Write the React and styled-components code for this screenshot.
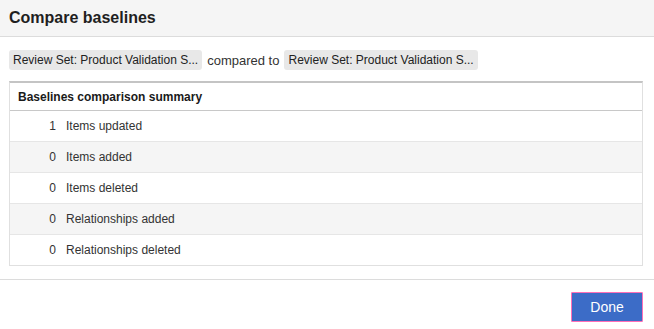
import React from "react";
import styled, { createGlobalStyle } from "styled-components";

const GlobalStyle = createGlobalStyle`
  html, body {
    margin: 0;
    padding: 0;
    background: #ffffff;
    font-family: "Liberation Sans", Arial, sans-serif;
    color: #222;
  }
`;

const Dialog = styled.div`
  width: 654px;
  height: 329px;
  display: flex;
  flex-direction: column;
  background: #fff;
`;

const Header = styled.div`
  height: 36px;
  background: #f5f5f5;
  border-bottom: 1px solid #dcdcdc;
  display: flex;
  align-items: center;
  padding-left: 9px;
`;

const Title = styled.h1`
  margin: 0;
  font-size: 16px;
  font-weight: bold;
  color: #1f1f1f;
`;

const Body = styled.div`
  flex: 1;
  padding: 13px 11px 0 9px;
  display: flex;
  flex-direction: column;
  gap: 11px;
`;

const CompareLine = styled.div`
  display: flex;
  align-items: center;
  gap: 5px;
  font-size: 13px;
  color: #333;
`;

const Chip = styled.span`
  display: inline-flex;
  align-items: center;
  height: 20px;
  padding: 0 4px;
  background: #e8e8e8;
  border-radius: 3px;
  font-size: 12px;
  color: #222;
`;

const Table = styled.div`
  border: 1px solid #e0e0e0;
  border-top: 2px solid #c4c4c4;
`;

const HeadRow = styled.div`
  height: 27px;
  display: flex;
  align-items: center;
  padding-left: 8px;
  font-size: 12px;
  font-weight: bold;
  color: #1a1a1a;
  border-bottom: 1px solid #c8c8c8;
`;

const Row = styled.div`
  height: 30px;
  display: grid;
  grid-template-columns: 46px 1fr;
  column-gap: 10px;
  align-items: center;
  font-size: 12px;
  color: #333;
  background: ${(p) => (p.$alt ? "#f5f5f5" : "#fff")};
  & + & {
    border-top: 1px solid #e6e6e6;
  }
`;

const Count = styled.span`
  text-align: right;
`;

const Footer = styled.div`
  height: 50px;
  border-top: 1px solid #dcdcdc;
  display: flex;
  align-items: flex-start;
  justify-content: flex-end;
  padding: 12px 11px 0 0;
  box-sizing: border-box;
`;

const DoneButton = styled.button`
  width: 72px;
  height: 30px;
  background: #3c6cc7;
  color: #fff;
  border: 1px solid #ff6fb7;
  border-radius: 1px;
  font-family: "Liberation Sans", Arial, sans-serif;
  font-size: 14px;
  cursor: pointer;
`;

const rows = [
  { count: 1, label: "Items updated" },
  { count: 0, label: "Items added" },
  { count: 0, label: "Items deleted" },
  { count: 0, label: "Relationships added" },
  { count: 0, label: "Relationships deleted" },
];

export default function App() {
  return (
    <>
      <GlobalStyle />
      <Dialog>
        <Header>
          <Title>Compare baselines</Title>
        </Header>
        <Body>
          <CompareLine>
            <Chip>Review Set: Product Validation S...</Chip>
            <span>compared to</span>
            <Chip>Review Set: Product Validation S...</Chip>
          </CompareLine>
          <Table>
            <HeadRow>Baselines comparison summary</HeadRow>
            {rows.map((r, i) => (
              <Row key={r.label} $alt={i % 2 === 1}>
                <Count>{r.count}</Count>
                <span>{r.label}</span>
              </Row>
            ))}
          </Table>
        </Body>
        <Footer>
          <DoneButton>Done</DoneButton>
        </Footer>
      </Dialog>
    </>
  );
}
